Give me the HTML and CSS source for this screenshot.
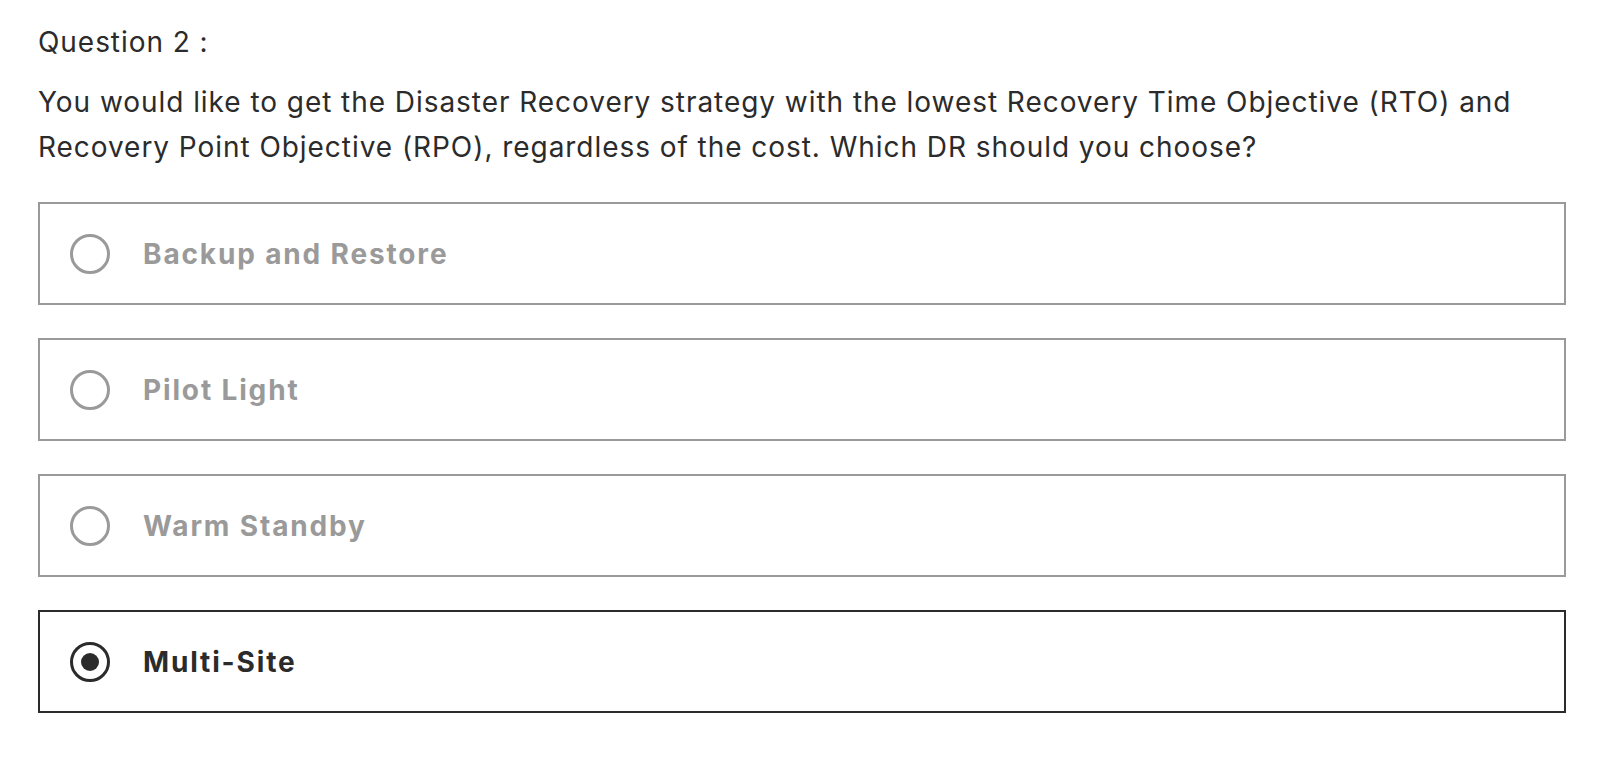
FILE: index.html
```html
<!DOCTYPE html>
<html>
<head>
<meta charset="utf-8">
<link rel="stylesheet" href="styles.css">
</head>
<body>
<div class="quiz">
  <p class="qnum">Question 2 :</p>
  <p class="qtext">You would like to get the Disaster Recovery strategy with the lowest Recovery Time Objective (RTO) and Recovery Point Objective (RPO), regardless of the cost. Which DR should you choose?</p>
  <div class="options">
    <div class="option"><span class="radio"></span><span class="label">Backup and Restore</span></div>
    <div class="option"><span class="radio"></span><span class="label">Pilot Light</span></div>
    <div class="option"><span class="radio"></span><span class="label">Warm Standby</span></div>
    <div class="option selected"><span class="radio"></span><span class="label">Multi-Site</span></div>
  </div>
</div>
</body>
</html>
```

FILE: styles.css
```css
html, body {
  margin: 0;
  padding: 0;
  background: #fff;
}
.quiz {
  padding: 22px 52px 0 38px;
  font-family: Inter, "Liberation Sans", Arial, sans-serif;
  font-feature-settings: "calt" 0;
  color: #2b2b2b;
}
.qnum {
  margin: 0;
  font-size: 28px;
  line-height: 40px;
  letter-spacing: 0.95px;
}
.qtext {
  margin: 18px 0 0 0;
  font-size: 28px;
  line-height: 45px;
  letter-spacing: 0.95px;
}
.options {
  margin-top: 32px;
  display: flex;
  flex-direction: column;
  gap: 33px;
}
.option {
  box-sizing: border-box;
  height: 103px;
  border: 2px solid #9a9a9a;
  display: flex;
  align-items: center;
  padding-left: 30px;
}
.radio {
  box-sizing: border-box;
  width: 40px;
  height: 40px;
  border-radius: 50%;
  border: 3px solid #9a9a9a;
  flex: none;
  display: flex;
  align-items: center;
  justify-content: center;
}
.label {
  margin-left: 33px;
  font-size: 28px;
  font-weight: bold;
  letter-spacing: 1.85px;
  color: #9a9a9a;
}
.option.selected {
  border-color: #2b2b2b;
}
.option.selected .radio {
  border-color: #2b2b2b;
}
.option.selected .radio::after {
  content: "";
  width: 18px;
  height: 18px;
  border-radius: 50%;
  background: #2b2b2b;
}
.option.selected .label {
  color: #2b2b2b;
}
```
